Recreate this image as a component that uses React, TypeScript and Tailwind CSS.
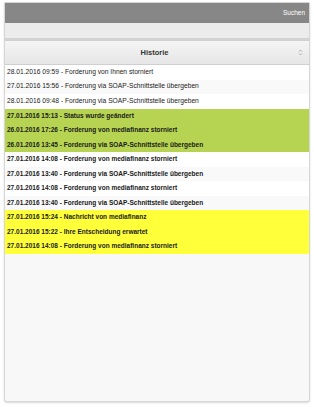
const rows: { text: string; bold?: boolean; bg: string }[] = [
  { text: "28.01.2016 09:59 - Forderung von Ihnen storniert", bg: "bg-white" },
  { text: "27.01.2016 15:56 - Forderung via SOAP-Schnittstelle übergeben", bg: "bg-[#f9f9f9]" },
  { text: "28.01.2016 09:48 - Forderung via SOAP-Schnittstelle übergeben", bg: "bg-white" },
  { text: "27.01.2016 15:13 - Status wurde geändert", bold: true, bg: "bg-[#b6d452]" },
  { text: "26.01.2016 17:26 - Forderung von mediafinanz storniert", bold: true, bg: "bg-[#b6d452]" },
  { text: "26.01.2016 13:45 - Forderung via SOAP-Schnittstelle übergeben", bold: true, bg: "bg-[#b6d452]" },
  { text: "27.01.2016 14:08 - Forderung von mediafinanz storniert", bold: true, bg: "bg-white" },
  { text: "27.01.2016 13:40 - Forderung via SOAP-Schnittstelle übergeben", bold: true, bg: "bg-[#f9f9f9]" },
  { text: "27.01.2016 14:08 - Forderung von mediafinanz storniert", bold: true, bg: "bg-white" },
  { text: "27.01.2016 13:40 - Forderung via SOAP-Schnittstelle übergeben", bold: true, bg: "bg-[#f9f9f9]" },
  { text: "27.01.2016 15:24 - Nachricht von mediafinanz", bold: true, bg: "bg-[#ffff3a]" },
  { text: "27.01.2016 15:22 - Ihre Entscheidung erwartet", bold: true, bg: "bg-[#ffff3a]" },
  { text: "27.01.2016 14:08 - Forderung von mediafinanz storniert", bold: true, bg: "bg-[#ffff3a]" },
];

export default function App() {
  return (
    <div className="h-[407px] w-[314px] bg-white p-[2px_4px_5px_4px] font-['Liberation_Sans',Arial,sans-serif]">
      <div className="flex h-full flex-col rounded-b-[3px] border border-[#d6d6d6] bg-[#f8f8f8] shadow-[0_1px_2px_rgba(0,0,0,0.15)]">
        <div className="flex h-[20px] items-center justify-end bg-[#878787] pr-[4px] text-[6.5px] text-white">
          Suchen
        </div>
        <div className="h-[17px] border-b-2 border-[#d3d3d3] bg-[#ececec]" />
        <div className="flex h-[25px] items-center border-y border-[#cfcfcf] bg-gradient-to-b from-[#f5f5f5] to-[#e6e6e6] px-[6px]">
          <span className="flex-1 text-center text-[7.5px] font-bold text-[#333]">Historie</span>
          <svg width="5" height="7" viewBox="0 0 5 7" className="text-[#999]">
            <path d="M1 2.6 L2.5 1 L4 2.6 M1 4.4 L2.5 6 L4 4.4" fill="none" stroke="currentColor" strokeWidth="0.7" />
          </svg>
        </div>
        <div className="flex flex-col">
          {rows.map((r, i) => (
            <div
              key={i}
              className={`flex h-[14.5px] items-center px-[2px] leading-none text-[#1a1a1a] ${r.bg} ${r.bold ? "text-[6.5px] font-bold" : "text-[6.7px]"}`}
            >
              {r.text}
            </div>
          ))}
        </div>
        <div className="flex-1" />
      </div>
    </div>
  );
}
